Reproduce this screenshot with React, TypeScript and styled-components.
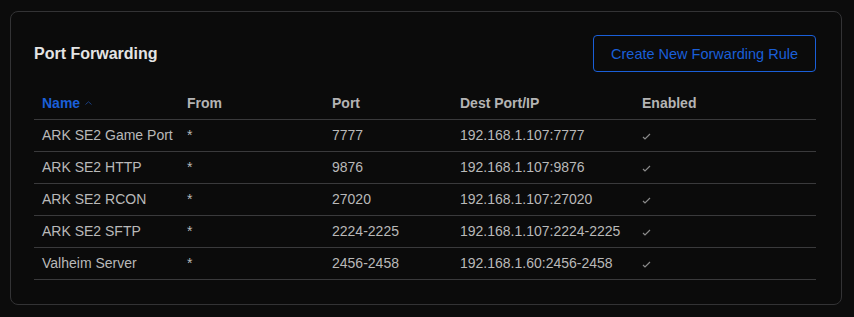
import React from 'react';
import styled, { createGlobalStyle } from 'styled-components';

interface IRule {
  name: string;
  from: string;
  port: string;
  dest: string;
  enabled: boolean;
}

const rules: IRule[] = [
  { name: 'ARK SE2 Game Port', from: '*', port: '7777', dest: '192.168.1.107:7777', enabled: true },
  { name: 'ARK SE2 HTTP', from: '*', port: '9876', dest: '192.168.1.107:9876', enabled: true },
  { name: 'ARK SE2 RCON', from: '*', port: '27020', dest: '192.168.1.107:27020', enabled: true },
  { name: 'ARK SE2 SFTP', from: '*', port: '2224-2225', dest: '192.168.1.107:2224-2225', enabled: true },
  { name: 'Valheim Server', from: '*', port: '2456-2458', dest: '192.168.1.60:2456-2458', enabled: true },
];

const GlobalStyle = createGlobalStyle`
  body {
    margin: 0;
    background: #0c0c0c;
    font-family: 'Liberation Sans', Arial, sans-serif;
  }
`;

const Page = styled.div`
  padding: 11px 12px 13px 10px;
`;

const Card = styled.section`
  background: #0b0b0b;
  border: 1px solid #333335;
  border-radius: 8px;
  padding: 23px 25px 24px 23px;
`;

const CardHeader = styled.header`
  display: flex;
  align-items: center;
  justify-content: space-between;
  margin-bottom: 15px;
`;

const Title = styled.h2`
  margin: 0;
  color: #e4e4e4;
  font-size: 16px;
  font-weight: 700;
`;

const CreateButton = styled.button`
  height: 37px;
  padding: 0 17px;
  background: transparent;
  border: 1px solid #1a5fd8;
  border-radius: 4px;
  color: #1a5fd8;
  font-family: inherit;
  font-size: 14.5px;
  cursor: pointer;
`;

const Table = styled.table`
  width: 100%;
  border-collapse: collapse;
  table-layout: fixed;
`;

const HeadCell = styled.th<{ $active?: boolean; $width: number }>`
  box-sizing: border-box;
  width: ${(p) => p.$width}px;
  height: 32px;
  padding: 0 8px;
  text-align: left;
  font-size: 14px;
  font-weight: 700;
  color: ${(p) => (p.$active ? '#1a5fd8' : '#b4b4b4')};
  border-bottom: 1px solid #3a3a3c;
`;

const SortIcon = styled.svg`
  margin-left: 5px;
  vertical-align: 3px;
`;

const Cell = styled.td`
  height: 31px;
  padding: 0 8px;
  font-size: 14px;
  color: #b9b9b9;
  border-bottom: 1px solid #3a3a3c;
  white-space: nowrap;
`;

const Check = () => (
  <svg width="9" height="7" viewBox="0 0 9 7">
    <path d="M1 4 L3 6 L8 1" fill="none" stroke="#8a8a8a" strokeWidth="1.2" />
  </svg>
);

const App: React.FC = () => {
  return (
    <>
      <GlobalStyle />
      <Page>
        <Card>
          <CardHeader>
            <Title>Port Forwarding</Title>
            <CreateButton>Create New Forwarding Rule</CreateButton>
          </CardHeader>
          <Table>
            <thead>
              <tr>
                <HeadCell $active $width={145}>
                  Name
                  <SortIcon width="7" height="4" viewBox="0 0 7 4">
                    <path d="M0.5 3.5 L3.5 0.8 L6.5 3.5" fill="none" stroke="#1a3f80" strokeWidth="1" />
                  </SortIcon>
                </HeadCell>
                <HeadCell $width={145}>From</HeadCell>
                <HeadCell $width={128}>Port</HeadCell>
                <HeadCell $width={182}>Dest Port/IP</HeadCell>
                <HeadCell $width={182}>Enabled</HeadCell>
              </tr>
            </thead>
            <tbody>
              {rules.map(({ name, from, port, dest, enabled }) => (
                <tr key={name}>
                  <Cell>{name}</Cell>
                  <Cell>{from}</Cell>
                  <Cell>{port}</Cell>
                  <Cell>{dest}</Cell>
                  <Cell>{enabled && <Check />}</Cell>
                </tr>
              ))}
            </tbody>
          </Table>
        </Card>
      </Page>
    </>
  );
};

export default App;
